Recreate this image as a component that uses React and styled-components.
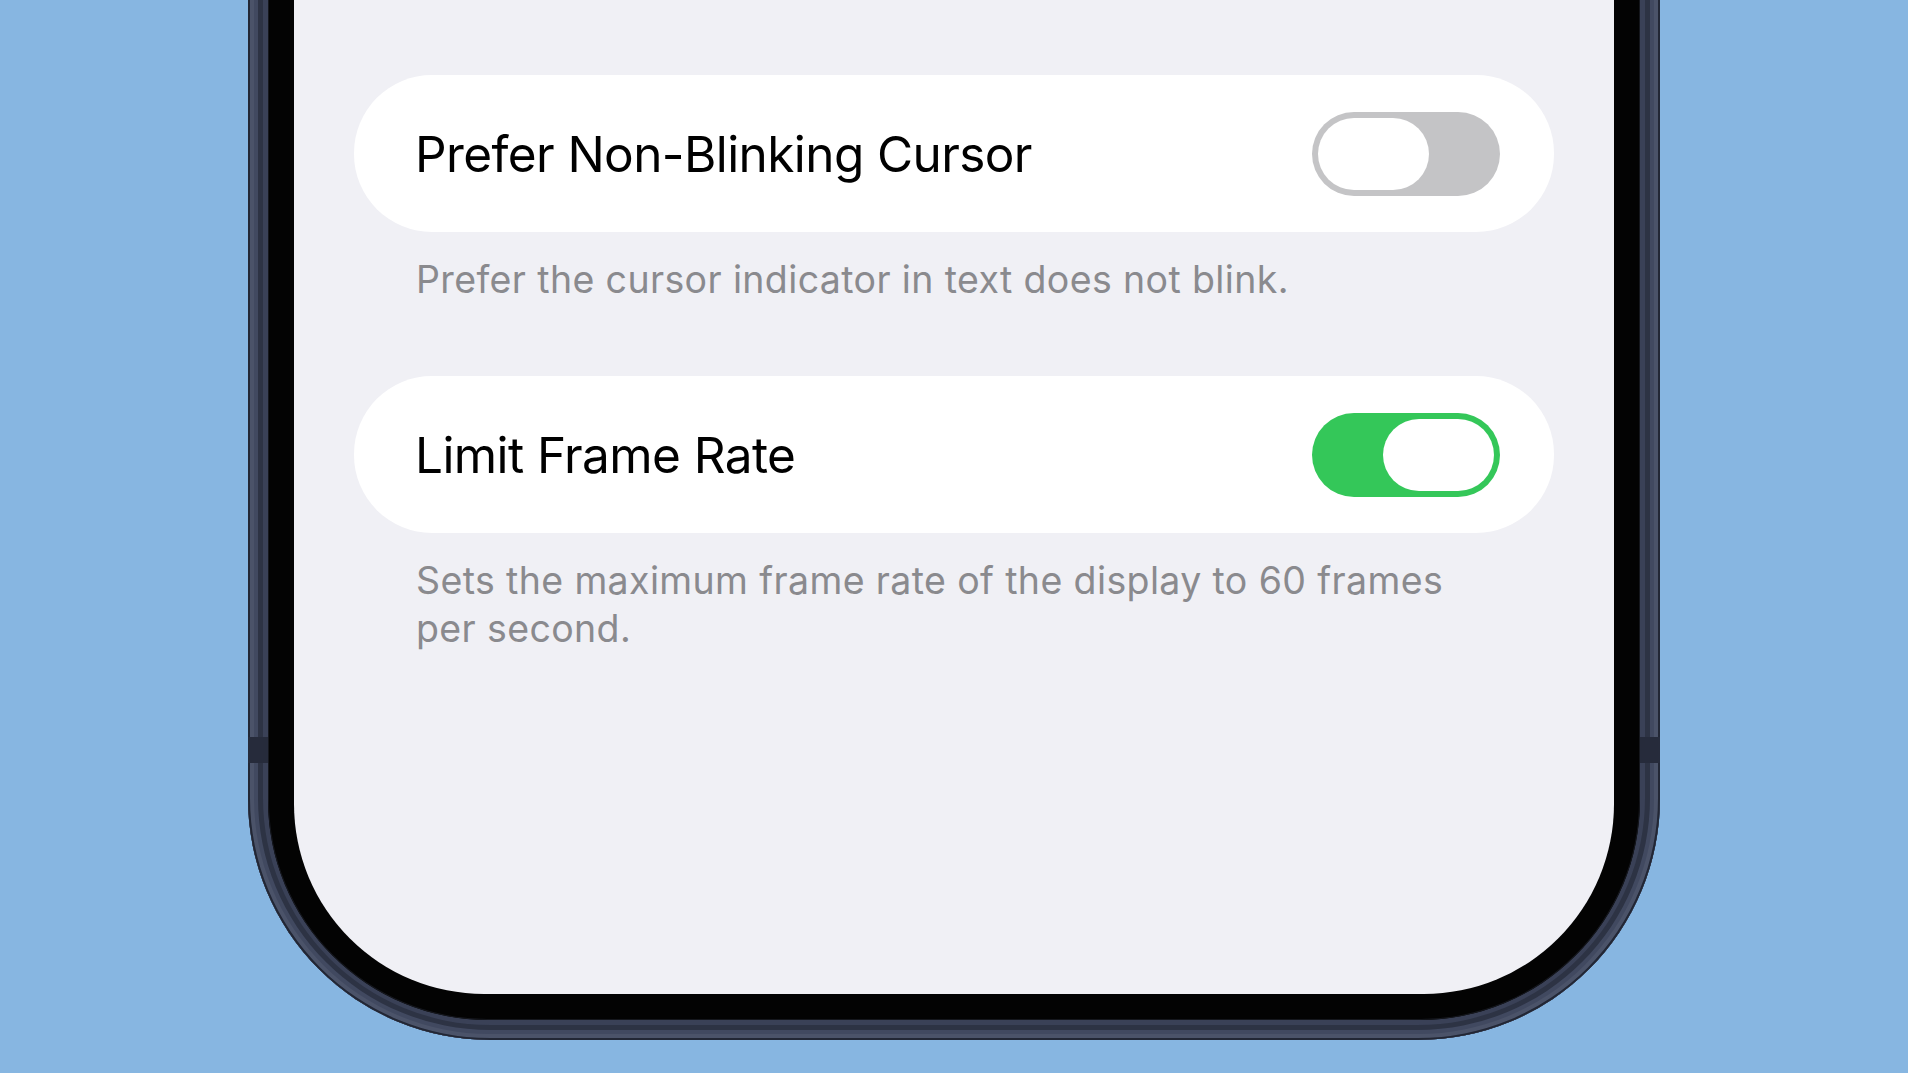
import React from 'react';
import styled, { createGlobalStyle } from 'styled-components';

const GlobalStyle = createGlobalStyle`
  html, body {
    margin: 0;
    padding: 0;
  }
  body {
    background: #87b6e1;
    font-family: Inter, "Noto Sans", "Liberation Sans", sans-serif;
    -webkit-font-smoothing: antialiased;
  }
`;

const Page = styled.div`
  width: 1908px;
  height: 1073px;
  overflow: hidden;
  display: flex;
  justify-content: center;
  align-items: flex-start;
  background: #87b6e1;
`;

// titanium band around the device
const Frame = styled.div`
  position: relative;
  box-sizing: border-box;
  width: 1412px;
  height: 1140px;
  margin-top: -100px;
  padding: 0 20px 20px;
  border-radius: 0 0 242px 242px;
  background: #3a4157;
  box-shadow:
    inset 0 0 0 2px #222735,
    inset 0 0 0 6px #4b5369,
    inset 0 0 0 10px #414960,
    inset 0 0 0 15px #2d3344;
`;

// antenna breaks on the side rails
const AntennaLine = styled.span`
  position: absolute;
  top: 837px;
  ${({ $side }) => ($side === 'left' ? 'left: 0;' : 'right: 0;')}
  width: 20px;
  height: 26px;
  background: #262b3b;
`;

const Bezel = styled.div`
  box-sizing: border-box;
  height: 100%;
  padding: 0 26px 26px;
  border-radius: 0 0 220px 220px;
  background: #030303;
  box-shadow: inset 0 0 0 1px #15171d;
`;

const Screen = styled.div`
  box-sizing: border-box;
  height: 100%;
  padding: 175px 60px 0;
  display: flex;
  flex-direction: column;
  gap: 72px;
  border-radius: 0 0 190px 190px;
  background: #f0f0f5;
`;

const Group = styled.section`
  display: flex;
  flex-direction: column;
`;

const Row = styled.div`
  box-sizing: border-box;
  height: 157px;
  padding: 0 54px 0 61px;
  display: flex;
  align-items: center;
  justify-content: space-between;
  border-radius: 78px;
  background: #ffffff;
`;

const Label = styled.span`
  font-size: 49.5px;
  font-weight: 400;
  color: #000;
  letter-spacing: -0.012em;
`;

const Footer = styled.p`
  margin: 0;
  padding: 24px 62px 0;
  font-size: 37.5px;
  line-height: 48px;
  color: #8a8a8e;
  letter-spacing: 0.01em;
`;

const Track = styled.div`
  box-sizing: border-box;
  width: 188px;
  height: 84px;
  padding: 6px;
  display: flex;
  justify-content: ${({ $on }) => ($on ? 'flex-end' : 'flex-start')};
  border-radius: 42px;
  background: ${({ $on }) => ($on ? '#34c759' : '#c4c4c6')};
`;

const Knob = styled.span`
  width: 111px;
  height: 72px;
  border-radius: 36px;
  background: #ffffff;
`;

const Toggle = ({ on }) => (
  <Track $on={on} role="switch" aria-checked={on}>
    <Knob />
  </Track>
);

const settings = [
  {
    id: 'cursor',
    label: 'Prefer Non-Blinking Cursor',
    footer: 'Prefer the cursor indicator in text does not blink.',
    on: false,
  },
  {
    id: 'framerate',
    label: 'Limit Frame Rate',
    footer: 'Sets the maximum frame rate of the display to 60 frames per second.',
    on: true,
  },
];

export default function App() {
  return (
    <>
      <GlobalStyle />
      <Page>
        <Frame>
          <AntennaLine $side="left" />
          <AntennaLine $side="right" />
          <Bezel>
            <Screen>
              {settings.map((s) => (
                <Group key={s.id}>
                  <Row>
                    <Label>{s.label}</Label>
                    <Toggle on={s.on} />
                  </Row>
                  <Footer>{s.footer}</Footer>
                </Group>
              ))}
            </Screen>
          </Bezel>
        </Frame>
      </Page>
    </>
  );
}
